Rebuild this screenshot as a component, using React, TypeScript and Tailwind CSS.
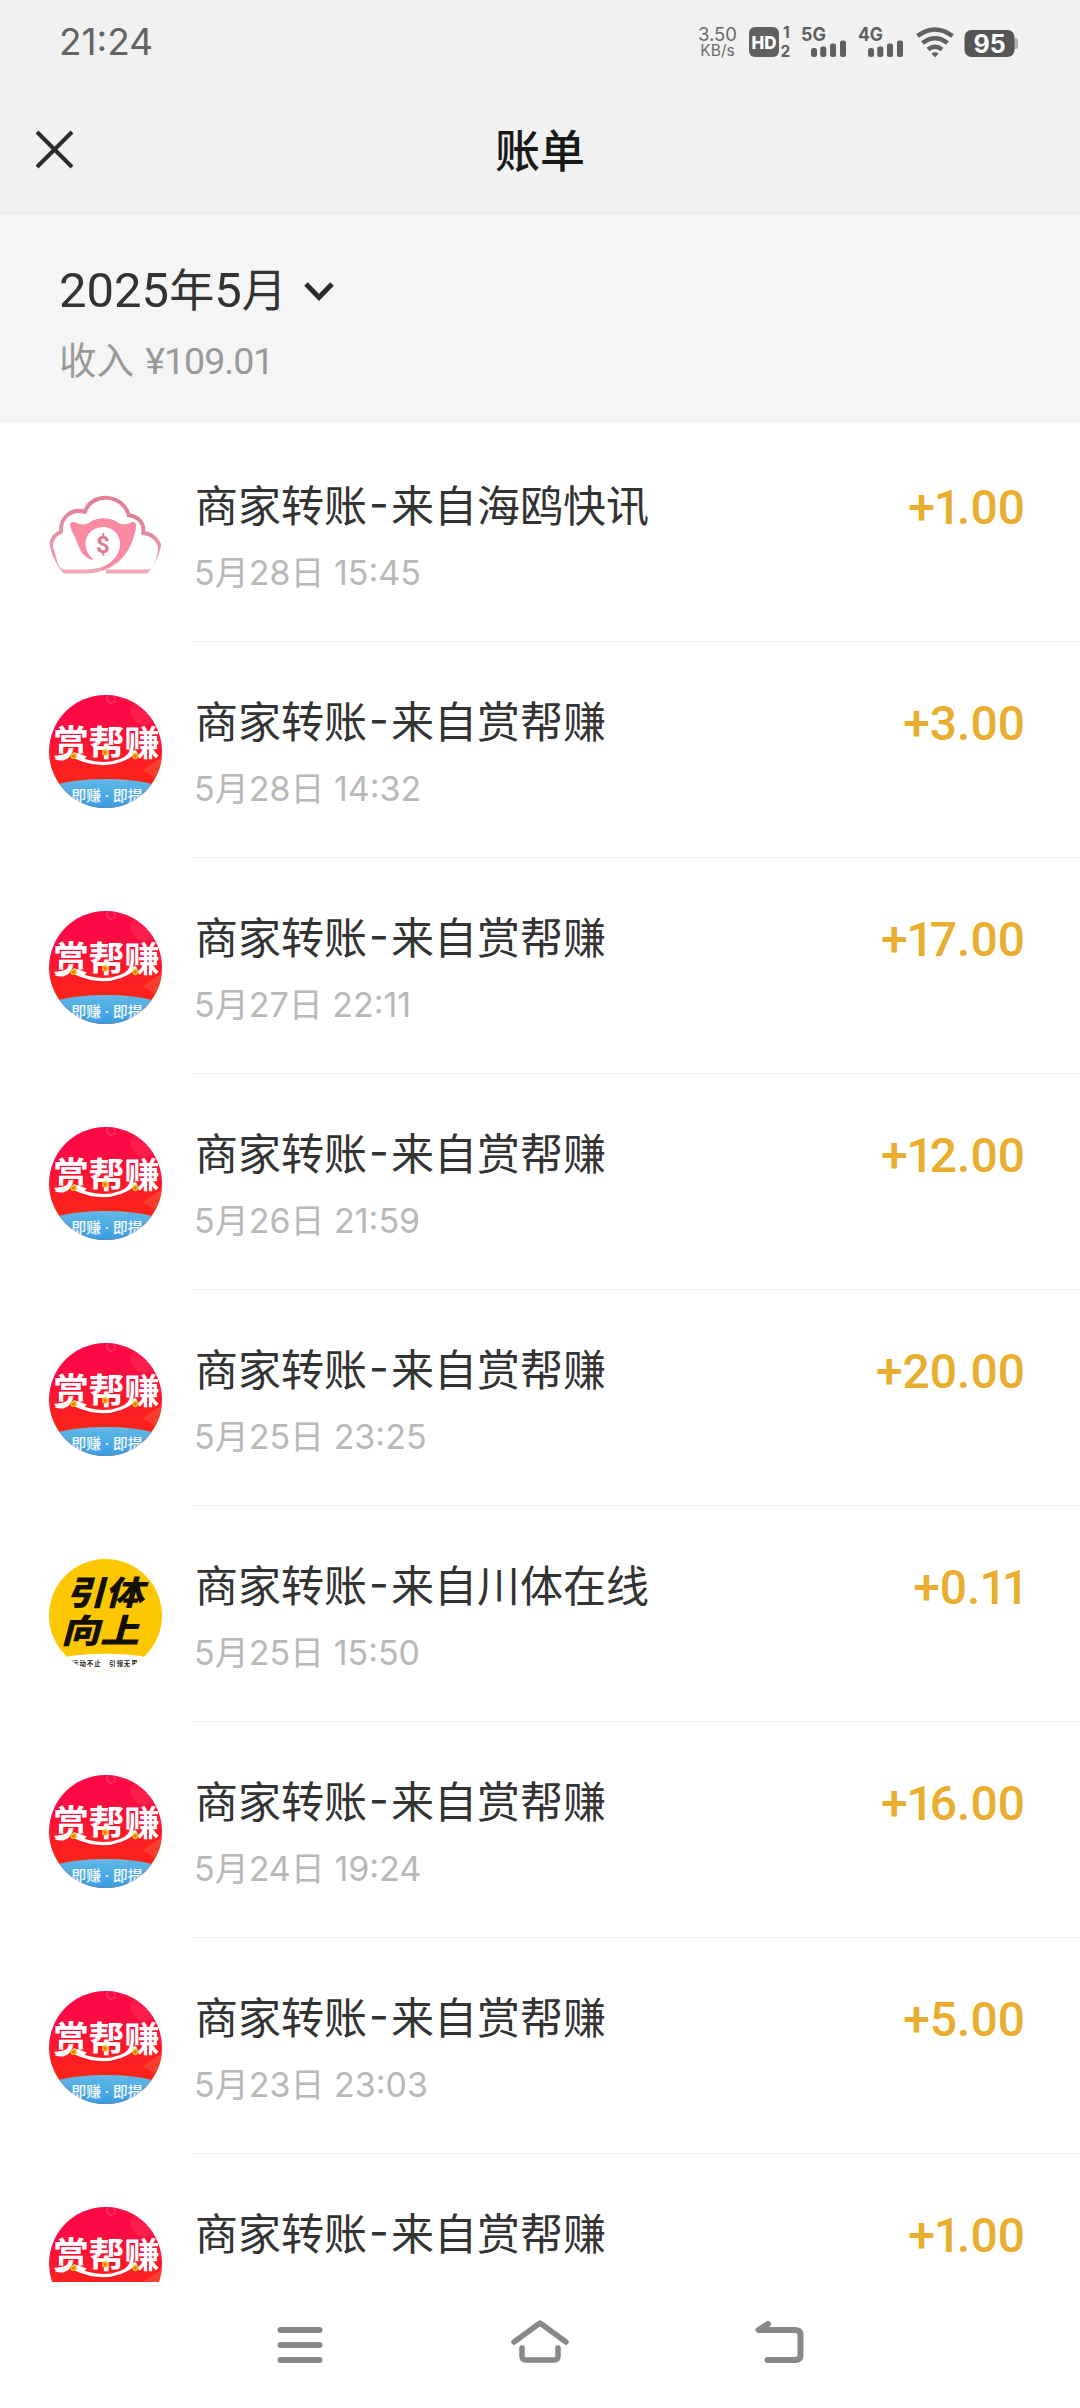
import React from "react";

type AvatarKind = "cloud" | "reward" | "pullup";

interface Bill {
  avatar: AvatarKind;
  from: string;
  time?: string;
  amount: string;
}

const bills: Bill[] = [
  { avatar: "cloud", from: "来自海鸥快讯", time: "5月28日 15:45", amount: "+1.00" },
  { avatar: "reward", from: "来自赏帮赚", time: "5月28日 14:32", amount: "+3.00" },
  { avatar: "reward", from: "来自赏帮赚", time: "5月27日 22:11", amount: "+17.00" },
  { avatar: "reward", from: "来自赏帮赚", time: "5月26日 21:59", amount: "+12.00" },
  { avatar: "reward", from: "来自赏帮赚", time: "5月25日 23:25", amount: "+20.00" },
  { avatar: "pullup", from: "来自川体在线", time: "5月25日 15:50", amount: "+0.11" },
  { avatar: "reward", from: "来自赏帮赚", time: "5月24日 19:24", amount: "+16.00" },
  { avatar: "reward", from: "来自赏帮赚", time: "5月23日 23:03", amount: "+5.00" },
  { avatar: "reward", from: "来自赏帮赚", amount: "+1.00" },
];

const CloudAvatar: React.FC = () => (
  <svg viewBox="0 0 113 113" className="w-full h-full">
    <defs>
      <linearGradient id="cloudLine" x1="0" y1="0" x2="0" y2="1">
        <stop offset="0" stopColor="#e07f97" />
        <stop offset="1" stopColor="#f0a5b8" />
      </linearGradient>
    </defs>
    <g fill="none" stroke="url(#cloudLine)" strokeWidth="4" strokeLinejoin="round">
      <path d="M78 36 C90 37 96 45 94 54 C106 55 114 66 110 76 C108 85 106 92 98 92.500 H57" />
      <path d="M80 37 C74 13 41 14 36 33 C24 29 11 37 12 53 C2 57 0 67 4 74 C6 83 8 92 15 92.500 H38 C62 92 80 76 84 52" />
    </g>
    <path
      d="M21 45 C23 41 27 44 31 45 C36 46 38 45 41 43 C49 38 61 38 68 43 C73 47 78 45 82 43.500 C86 42 88 45 87 49 C84 63 76 84 50 92 C62 84 70 77 71 67 C72 57 65 48 54 48 C43 48 36 57 36.500 65 C37 72 40 77 45 81 C34 80 30 69 27 61 C25 55 21 50 21 45 Z"
      fill="#fa8aa2"
    />
    <text x="54" y="73.500" textAnchor="middle" fontSize="24" fontWeight="700" fill="#e07890" fontFamily="Roboto, sans-serif">
      $
    </text>
  </svg>
);

const RewardAvatar: React.FC = () => (
  <svg viewBox="0 0 113 113" className="w-full h-full">
    <defs>
      <linearGradient id="rewardBg" x1="0" y1="0" x2="0" y2="1">
        <stop offset="0.2" stopColor="#fb0a45" />
        <stop offset="0.75" stopColor="#fb2418" />
      </linearGradient>
      <linearGradient id="rewardBlue" x1="0" y1="0" x2="0" y2="1">
        <stop offset="0" stopColor="#62b9e6" />
        <stop offset="1" stopColor="#3a9be0" />
      </linearGradient>
    </defs>
    <rect width="113" height="113" fill="url(#rewardBg)" />
    <circle cx="62" cy="4" r="4" fill="none" stroke="#fb2a5c" strokeWidth="2" />
    <circle cx="95" cy="17" r="13" fill="#fb2a50" opacity="0.6" />
    <path d="M94 75 L113 62 V88 Z" fill="#f73c30" />
    <path d="M0 113 V93 C22 81 91 81 113 93 V113 Z" fill="url(#rewardBlue)" />
    <text
      x="57.500"
      y="60.500"
      textAnchor="middle"
      fontSize="35.500"
      fontWeight="700"
      fill="#fff"
      fontFamily="'Noto Sans CJK SC', sans-serif"
    >
      赏帮赚
    </text>
    <path d="M7 63 Q14 66 20 60 M26 62 Q60 77 85 58" fill="none" stroke="#fff" strokeWidth="3.200" />
    <g fill="#fb5a1c" stroke="#f9b21e" strokeWidth="2">
      <circle cx="24.500" cy="61" r="2.200" />
      <circle cx="56" cy="57.500" r="2.200" />
      <circle cx="86.500" cy="61" r="2.200" />
    </g>
    <text x="58" y="106" textAnchor="middle" fontSize="15" fontWeight="500" fill="#f2faff" fontFamily="'Noto Sans CJK SC', sans-serif">
      即赚<tspan fontFamily="Roboto"> · </tspan>即提
    </text>
  </svg>
);

const PullupAvatar: React.FC = () => (
  <svg viewBox="0 0 113 113" className="w-full h-full">
    <rect width="113" height="113" fill="#fdc703" />
    <path d="M0 113 V103 C22 92 91 92 113 103 V113 Z" fill="#fff" />
    <g fill="#141000" fontSize="36" fontWeight="900" fontFamily="'Noto Sans CJK SC', sans-serif">
      <text transform="translate(17 46) skewX(-15) scale(1.08 0.93)">引体</text>
      <text transform="translate(12 84) skewX(-15) scale(1.08 0.93)">向上</text>
    </g>
    <g fill="#222" fontSize="6.500" fontWeight="700" letterSpacing="0.9" fontFamily="'Noto Sans CJK SC', sans-serif">
      <text x="23" y="107">运动不止</text>
      <text x="60" y="107">引领无界</text>
    </g>
  </svg>
);

const avatars: Record<AvatarKind, React.FC> = {
  cloud: CloudAvatar,
  reward: RewardAvatar,
  pullup: PullupAvatar,
};

const Signal: React.FC<{ label: string }> = ({ label }) => (
  <svg viewBox="0 0 46 32" className="w-[46px] h-8 overflow-visible" fill="#606060">
    <text x="-1" y="15" fontSize="19" fontWeight="700" textLength="25" lengthAdjust="spacingAndGlyphs" fontFamily="Inter, sans-serif">
      {label}
    </text>
    <rect x="9" y="22" width="6" height="9" rx="2.500" />
    <rect x="18.300" y="20.500" width="6" height="10.500" rx="2" />
    <rect x="28" y="17.500" width="6" height="13.500" rx="2" />
    <rect x="38" y="14.500" width="6" height="16.500" rx="2" />
  </svg>
);

const StatusBar: React.FC = () => (
  <div className="flex justify-between h-[86px] pl-[59px] pr-[61px] font-['Inter']">
    <div className="pt-[17px] text-[37px] leading-[50px] text-[#646464]">21:24</div>
    <div className="flex items-start pt-[26px]">
      <div className="w-[39px] mr-3 text-center text-[#6b6b6b] whitespace-nowrap">
        <div className="text-[18.500px] leading-[17px]">3.50</div>
        <div className="text-[15.500px] leading-[16px]">KB/s</div>
      </div>
      <svg viewBox="0 0 44 32" className="w-11 h-8 mr-[9px] overflow-visible" fill="#606060" fontFamily="Inter, sans-serif" fontWeight="700">
        <rect x="0" y="1" width="30" height="30" rx="6" />
        <text x="2.500" y="22.500" fontSize="18" fontWeight="800" fill="#fff" textLength="25" lengthAdjust="spacingAndGlyphs">HD</text>
        <text x="34" y="12" fontSize="15.500">1</text>
        <text x="31.500" y="31" fontSize="15.500">2</text>
      </svg>
      <Signal label="5G" />
      <div className="w-[11px]" />
      <Signal label="4G" />
      <svg viewBox="0 0 38 32" className="w-[38px] h-8 ml-[11px]" fill="none" stroke="#606060" strokeWidth="4.500">
        <path d="M1.500 10 Q19 -3 36.500 10" />
        <path d="M6.500 17 Q19 7.500 31.500 17" />
        <path d="M12 23.500 Q19 18 26 23.500" />
        <path d="M15.500 27.500 Q19 25 22.500 27.500 L19 31.500 Z" fill="#606060" stroke="none" />
      </svg>
      <svg viewBox="0 0 55 32" className="w-[55px] h-8 ml-[10px]">
        <rect x="48" y="12" width="6" height="11" rx="2.500" fill="#b0b0b0" />
        <rect x="0.500" y="4" width="50" height="27" rx="7" fill="#555" />
        <text x="25.500" y="26.500" textAnchor="middle" fontSize="25" fontWeight="700" fill="#fff" fontFamily="Inter, sans-serif">
          95
        </text>
      </svg>
    </div>
  </div>
);

const NavBar: React.FC = () => (
  <div className="relative z-10 shrink-0 h-[126px] bg-white flex justify-center gap-[180px] pt-[34px]">
    <svg viewBox="0 0 60 56" className="w-[60px] h-14" fill="none" stroke="#888" strokeWidth="6" strokeLinecap="round">
      <path d="M10.500 14 H49.500 M10.500 29 H49.500 M10.500 44 H49.500" />
    </svg>
    <svg viewBox="0 0 60 56" className="w-[60px] h-14" fill="none" stroke="#888" strokeWidth="5.500" strokeLinecap="round" strokeLinejoin="round">
      <path d="M4 26 L30 7 L56 26" />
      <path d="M12 32 V40 Q12 44 16 44 H44 Q48 44 48 40 V32" />
    </svg>
    <svg viewBox="0 0 60 56" className="w-[60px] h-14" fill="none" stroke="#888" strokeWidth="6" strokeLinecap="round" strokeLinejoin="round">
      <path d="M18 8 L8.500 14 H45 Q50.500 14 50.500 19 V39 Q50.500 44 45 44 H17.500" />
    </svg>
  </div>
);

// the digit 1 is set narrower than the other figures
const Amount: React.FC<{ value: string }> = ({ value }) => (
  <div className="pt-[52px] pr-[55px] font-['Roboto'] font-medium text-[48px] leading-[60px] text-[#e9ae2e]">
    {value.split("").map((c, i) => (
      <span key={i} className={c === "1" ? "-ml-[1px] -mr-[4px]" : ""}>{c}</span>
    ))}
  </div>
);

const BillRow: React.FC<{ bill: Bill }> = ({ bill }) => {
  const Avatar = avatars[bill.avatar];
  return (
    <div className="flex shrink-0 h-[216px] pl-[49px]">
      <div className="w-[113px] h-[113px] mt-[53px] mr-[28px] rounded-full overflow-hidden">
        <Avatar />
      </div>
      <div className="flex flex-1 justify-between border-b border-[#f3f3f3] pl-[5px] whitespace-nowrap">
        <div className="pt-[47px]">
          <div className="flex text-[43px] leading-[60px] text-[#333]">
            <span>商家转账</span>
            <span className="w-[24px] text-center font-['Inter']">-</span>
            <span>{bill.from}</span>
          </div>
          <div className="mt-[15px] -ml-[1px] text-[34px] leading-[50px] text-[#b8b8b8] font-['Inter','Noto_Sans_CJK_SC',sans-serif]">
            {bill.time}
          </div>
        </div>
        <Amount value={bill.amount} />
      </div>
    </div>
  );
};

const App: React.FC = () => {
  return (
    <div className="w-[1080px] h-[2408px] flex flex-col overflow-hidden bg-white font-['Noto_Sans_CJK_SC',sans-serif]">
      <div className="shrink-0 h-[214px] bg-[#f1f1f1] border-b border-[#ebebeb]">
        <StatusBar />
        <div className="grid grid-cols-3 h-[127px] pl-[34px] pr-[34px]">
          <svg viewBox="0 0 42 42" className="w-[42px] h-[42px] mt-[43px]" stroke="#2b2b2b" strokeWidth="4">
            <path d="M3 3 L38 38 M38 3 L3 38" />
          </svg>
          <div className="text-center font-medium text-[45px] leading-[60px] pt-[33px] text-[#191919]">账单</div>
        </div>
      </div>

      <div className="shrink-0 h-[209px] bg-[#f5f5f5] pl-[59px] pt-[47px]">
        <div className="flex items-center h-[60px] text-[#333]">
          <span className="font-['Roboto','Noto_Sans_CJK_SC',sans-serif] text-[49px] leading-[60px]">
            2025<span className="text-[45px]">年</span>5<span className="text-[45px]">月</span>
          </span>
          <svg viewBox="0 0 30 20" className="w-[30px] h-5 ml-[17px] mt-[2px]" fill="none" stroke="#2b2b2b" strokeWidth="5">
            <path d="M2 2 L15 15.500 L28 2" />
          </svg>
        </div>
        <div className="mt-[15px] text-[37.500px] leading-[50px] text-[#999] font-['Roboto','Noto_Sans_CJK_SC',sans-serif]">
          收入 <span className="ml-[2px] tracking-[-1px]">¥109.01</span>
        </div>
      </div>

      <div className="flex flex-col flex-1 min-h-0 overflow-hidden pt-[3px]">
        {bills.map((bill, i) => (
          <BillRow key={i} bill={bill} />
        ))}
      </div>

      <NavBar />
    </div>
  );
};

export default App;
